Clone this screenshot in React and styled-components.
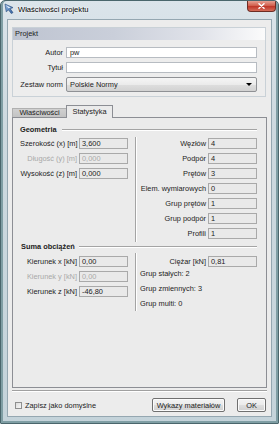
import React from 'react';
import styled, { createGlobalStyle } from 'styled-components';

const GlobalStyle = createGlobalStyle`
  html, body { margin: 0; padding: 0; background: #ffffff; }
  body { font-family: "Liberation Sans", Arial, sans-serif; }
  *, *::before, *::after { box-sizing: border-box; }
`;

const Window = styled.div`
  width: 279px;
  height: 424px;
  display: flex;
  flex-direction: column;
  border: 1px solid #4a666c;
  border-radius: 5px 5px 1px 1px;
  background: linear-gradient(180deg, #dbe4ea 0%, #cdd9df 30%, #c4d3da 100%);
  box-shadow: inset 2px 0 0 #7f9ea4, inset -2px 0 0 #7f9ea4, inset 0 -2px 0 #7f9ea4;
  font-family: "Liberation Sans", Arial, sans-serif;
  font-size: 7.4px;
  color: #1c1c1c;
  overflow: hidden;
`;

const TitleBar = styled.div`
  height: 18px;
  flex: none;
  display: flex;
  align-items: flex-start;
  padding-left: 3px;
`;

const AppIcon = styled.svg`
  width: 10px;
  height: 11px;
  margin-top: 2px;
  flex: none;
`;

const TitleText = styled.div`
  margin-left: 4px;
  line-height: 17px;
  font-size: 7.6px;
  color: #000;
  text-shadow: 0 0 3px #ffffff, 0 0 2px #ffffff;
  white-space: nowrap;
`;

const CloseButton = styled.div`
  margin-left: auto;
  margin-right: 2px;
  width: 29px;
  height: 11px;
  flex: none;
  display: flex;
  align-items: center;
  justify-content: center;
  border: 1px solid #6e2c24;
  border-top: none;
  border-radius: 0 0 4px 4px;
  background: linear-gradient(180deg, #e6a193 0%, #d2614f 45%, #c0392a 55%, #d56c59 100%);
`;

const Client = styled.div`
  flex: 1;
  margin: 0 6px 6px 6px;
  border: 1px solid #95a7b1;
  background: #ececec;
  display: flex;
  flex-direction: column;
  padding: 7px 4px 4px 4px;
  min-height: 0;
`;

const GroupBox = styled.div`
  height: 70px;
  flex: none;
  margin-right: 1px;
  border: 1px solid #c9d1d7;
  background: #ededed;
`;

const GroupHeader = styled.div`
  height: 12px;
  line-height: 12px;
  padding-left: 2px;
  color: #222;
  background: linear-gradient(90deg, #bec4d1 0%, #cacfda 40%, #e1e3ea 75%, #fbfbfb 100%);
`;

const FormGrid = styled.div`
  display: grid;
  grid-template-columns: 50px 191px;
  grid-template-rows: 11px 11px 15px;
  column-gap: 3px;
  row-gap: 4px;
  align-items: center;
  padding-top: 7px;
`;

const FieldLabel = styled.div`
  text-align: right;
  white-space: nowrap;
  color: ${(p) => (p.$disabled ? '#a9a9a9' : '#1c1c1c')};
`;

const TextBox = styled.div`
  height: 11px;
  background: #ffffff;
  border: 1px solid #b7bcc2;
  padding-left: 3px;
  line-height: 9px;
  white-space: nowrap;
`;

const Select = styled.div`
  height: 15px;
  border: 1px solid #8f9195;
  border-radius: 2px;
  background: linear-gradient(180deg, #f5f5f5 0%, #ebebeb 50%, #dedede 51%, #d2d2d2 100%);
  display: flex;
  align-items: center;
  justify-content: space-between;
  padding: 0 3px 0 3px;
  white-space: nowrap;
`;

const Arrow = styled.span`
  width: 0;
  height: 0;
  border-left: 3px solid transparent;
  border-right: 3px solid transparent;
  border-top: 3px solid #000;
  margin-right: 1px;
`;

const TabStrip = styled.div`
  height: 12px;
  margin-top: 8px;
  flex: none;
  display: flex;
  align-items: flex-end;
  position: relative;
  z-index: 1;
`;

const Tab = styled.div`
  width: ${(p) => p.$w}px;
  height: ${(p) => (p.$active ? 13 : 9)}px;
  margin-bottom: ${(p) => (p.$active ? -1 : 0)}px;
  margin-left: ${(p) => (p.$active ? -1 : 0)}px;
  border: 1px solid ${(p) => (p.$active ? '#8c8e94' : '#b0b0b0')};
  border-bottom: none;
  background: ${(p) =>
    p.$active ? '#ebebeb' : 'linear-gradient(180deg, #d0d0d0 0%, #c3c3c3 100%)'};
  text-align: center;
  line-height: ${(p) => (p.$active ? 11 : 8)}px;
  white-space: nowrap;
`;

const TabPanel = styled.div`
  flex: 1;
  min-height: 0;
  border: 1px solid #8c8e94;
  background: #ebebeb;
  padding: 7px 9px 0 7px;
  display: flex;
  flex-direction: column;
`;

const SectionHeader = styled.div`
  height: 9px;
  display: flex;
  align-items: center;
  gap: ${(p) => p.$gap}px;
  padding-left: ${(p) => p.$indent || 0}px;
`;

const SectionTitle = styled.div`
  font-weight: bold;
  white-space: nowrap;
  color: #1c1c1c;
`;

const Rule = styled.div`
  flex: 1;
  border-top: 1px solid #a4a4a4;
  border-bottom: 1px solid #ffffff;
`;

const Columns = styled.div`
  display: grid;
  grid-template-columns: 116px 121px;
  margin-top: ${(p) => p.$top}px;
`;

const LeftCol = styled.div`
  display: grid;
  grid-template-columns: 57px 49px;
  grid-auto-rows: 11px;
  column-gap: 2px;
  row-gap: 4px;
  align-content: start;
  align-items: center;
  border-right: 1px solid #a4a4a4;
  padding-top: ${(p) => p.$top}px;
`;

const RightCol = styled.div`
  display: grid;
  grid-template-columns: 66px 49px;
  column-gap: 2px;
  row-gap: 4px;
  align-content: start;
  align-items: center;
  border-left: 1px solid #ffffff;
  padding: ${(p) => p.$top}px 0 ${(p) => p.$bottom}px 3px;
`;

const StatBox = styled.div`
  height: 11px;
  background: #e9e9e9;
  border: 1px solid #a9a9a9;
  padding-left: 2px;
  line-height: 9px;
  white-space: nowrap;
  color: ${(p) => (p.$disabled ? '#a9a9a9' : '#1c1c1c')};
`;

const Notes = styled.div`
  grid-column: 1 / -1;
  margin-top: -5px;
`;

const NoteLine = styled.div`
  height: 15px;
  line-height: 15px;
  white-space: nowrap;
`;

const Separator = styled.div`
  height: 2px;
  flex: none;
  margin-top: 2px;
  border-top: 1px solid #a0a0a0;
  border-bottom: 1px solid #ffffff;
`;

const Footer = styled.div`
  height: 14px;
  flex: none;
  margin-top: 6px;
  display: flex;
  align-items: center;
`;

const CheckLabel = styled.div`
  display: flex;
  align-items: center;
  gap: 3px;
  margin-left: 3px;
  white-space: nowrap;
`;

const CheckBox = styled.span`
  width: 7px;
  height: 7px;
  border: 1px solid #8e8f8f;
  background: linear-gradient(135deg, #dcdcdc 0%, #f7f7f7 100%);
`;

const ButtonRow = styled.div`
  margin-left: auto;
  margin-right: 1px;
  display: flex;
  gap: 12px;
`;

const Button = styled.div`
  width: ${(p) => p.$w}px;
  height: 14px;
  border: 1px solid #707070;
  border-radius: 2px;
  background: linear-gradient(180deg, #f3f3f3 0%, #ebebeb 50%, #dedede 51%, #d0d0d0 100%);
  box-shadow: inset 0 0 0 1px #fbfbfb;
  display: flex;
  align-items: center;
  justify-content: center;
  white-space: nowrap;
  color: #1c1c1c;
`;

const geoLeft = [
  { label: 'Szerokość (x) [m]', value: '3,600' },
  { label: 'Długość (y) [m]', value: '0,000', disabled: true },
  { label: 'Wysokość (z) [m]', value: '0,000' },
];

const geoRight = [
  { label: 'Węzłów', value: '4' },
  { label: 'Podpór', value: '4' },
  { label: 'Prętów', value: '3' },
  { label: 'Elem. wymiarowych', value: '0' },
  { label: 'Grup prętów', value: '1' },
  { label: 'Grup podpór', value: '1' },
  { label: 'Profili', value: '1' },
];

const loadLeft = [
  { label: 'Kierunek x [kN]', value: '0,00' },
  { label: 'Kierunek y [kN]', value: '0,00', disabled: true },
  { label: 'Kierunek z [kN]', value: '-46,80' },
];

function StatRows({ rows }) {
  return rows.map((r) => (
    <React.Fragment key={r.label}>
      <FieldLabel $disabled={r.disabled}>{r.label}</FieldLabel>
      <StatBox $disabled={r.disabled}>{r.value}</StatBox>
    </React.Fragment>
  ));
}

export default function App() {
  return (
    <>
      <GlobalStyle />
      <Window>
        <TitleBar>
          <AppIcon viewBox="0 0 10 11">
            <defs>
              <linearGradient id="ig" x1="0" y1="0" x2="1" y2="1">
                <stop offset="0" stopColor="#9cc0ea" />
                <stop offset="1" stopColor="#2f5f9e" />
              </linearGradient>
            </defs>
            <path d="M1 1 L9 4.6 L6.2 5.8 L9 9.6 L7.3 10.6 L4.6 6.9 L2.2 8.8 Z" fill="url(#ig)" stroke="#284a78" strokeWidth="0.6" />
            <path d="M2.2 2.6 L6.6 4.6 L4.6 5.3 Z" fill="#e8f1fb" />
          </AppIcon>
          <TitleText>Właściwości projektu</TitleText>
          <CloseButton>
            <svg width="7" height="6" viewBox="0 0 7 6">
              <path d="M1 0.8 L6 5.2 M6 0.8 L1 5.2" stroke="#ffffff" strokeWidth="1.5" strokeLinecap="round" />
            </svg>
          </CloseButton>
        </TitleBar>
        <Client>
          <GroupBox>
            <GroupHeader>Projekt</GroupHeader>
            <FormGrid>
              <FieldLabel>Autor</FieldLabel>
              <TextBox>pw</TextBox>
              <FieldLabel>Tytuł</FieldLabel>
              <TextBox />
              <FieldLabel>Zestaw norm</FieldLabel>
              <Select>
                <span>Polskie Normy</span>
                <Arrow />
              </Select>
            </FormGrid>
          </GroupBox>
          <TabStrip>
            <Tab $w={55}>Właściwości</Tab>
            <Tab $w={47} $active>Statystyka</Tab>
          </TabStrip>
          <TabPanel>
            <SectionHeader $gap={5}>
              <SectionTitle>Geometria</SectionTitle>
              <Rule />
            </SectionHeader>
            <Columns $top={3}>
              <LeftCol $top={1}>
                <StatRows rows={geoLeft} />
              </LeftCol>
              <RightCol $top={1} $bottom={3}>
                <StatRows rows={geoRight} />
              </RightCol>
            </Columns>
            <SectionHeader $gap={4} $indent={1}>
              <SectionTitle>Suma obciążeń</SectionTitle>
              <Rule />
            </SectionHeader>
            <Columns $top={2}>
              <LeftCol $top={3}>
                <StatRows rows={loadLeft} />
              </LeftCol>
              <RightCol $top={3} $bottom={0}>
                <StatRows rows={[{ label: 'Ciężar [kN]', value: '0,81' }]} />
                <Notes>
                  <NoteLine>Grup stałych: 2</NoteLine>
                  <NoteLine>Grup zmiennych: 3</NoteLine>
                  <NoteLine>Grup multi: 0</NoteLine>
                </Notes>
              </RightCol>
            </Columns>
          </TabPanel>
          <Separator />
          <Footer>
            <CheckLabel>
              <CheckBox />
              <span>Zapisz jako domyślne</span>
            </CheckLabel>
            <ButtonRow>
              <Button $w={73}>Wykazy materiałów</Button>
              <Button $w={29}>OK</Button>
            </ButtonRow>
          </Footer>
        </Client>
      </Window>
    </>
  );
}
